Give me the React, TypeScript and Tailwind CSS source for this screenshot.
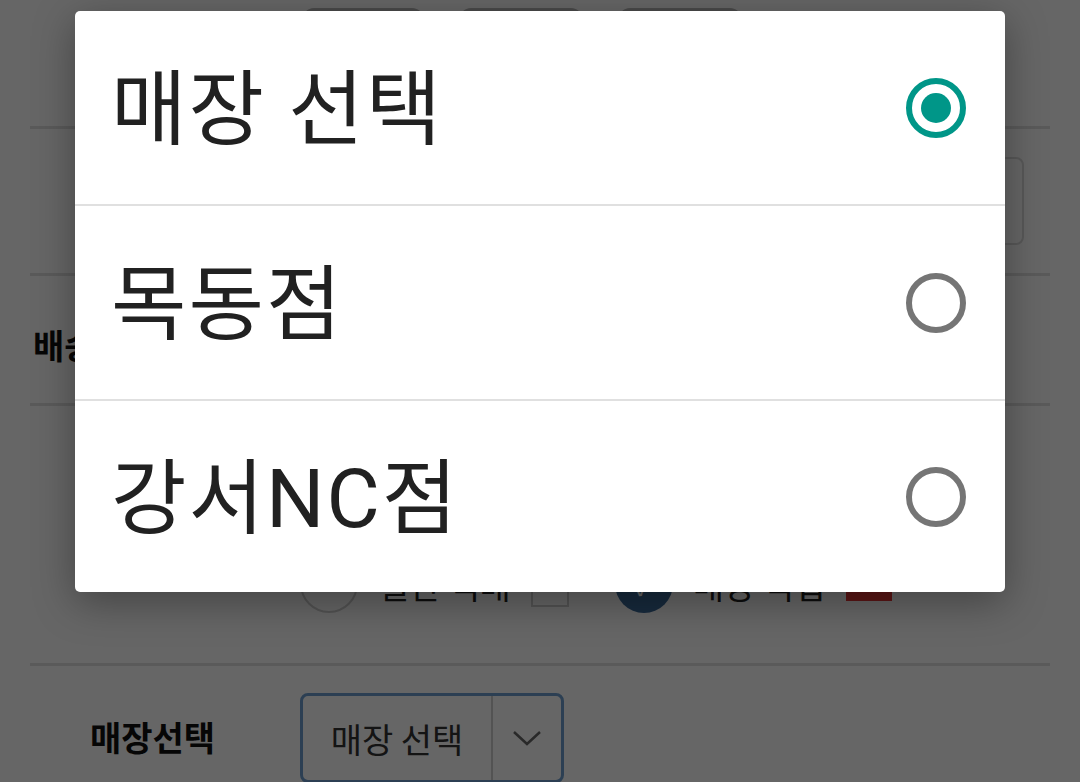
import { useState } from "react";

const stores = ["매장 선택", "목동점", "강서NC점"];

function Radio({ checked }: { checked: boolean }) {
  return (
    <div
      className={`w-[60px] h-[60px] rounded-full border-[6px] flex items-center justify-center ${
        checked ? "border-[#009688]" : "border-[#757575]"
      }`}
    >
      {checked && <div className="w-[30px] h-[30px] rounded-full bg-[#009688]" />}
    </div>
  );
}

function FormBehind() {
  return (
    <div className="min-h-[782px] bg-white px-[30px] font-['Noto_Sans_CJK_KR',sans-serif]">
      {/* tab buttons */}
      <div className="h-[126px] flex pt-[8px] pl-[272px] gap-[35px]">
        <div className="w-[122px] h-[90px] rounded-xl bg-[#b9b9b9]" />
        <div className="w-[124px] h-[90px] rounded-xl bg-[#b9b9b9]" />
        <div className="w-[124px] h-[90px] rounded-xl bg-[#b9b9b9]" />
      </div>
      <div className="h-[3px] bg-[#e0e0e0]" />
      <div className="h-[144px] flex items-center pl-[270px] pr-[26px]">
        <div className="w-full h-[88px] rounded-lg border-2 border-[#dcdcdc]" />
      </div>
      <div className="h-[3px] bg-[#e0e0e0]" />
      <div className="h-[127px] flex items-center pt-[10px]">
        <div className="pl-[3px] text-[34px] font-bold text-[#111] whitespace-nowrap">배송 방법</div>
      </div>
      <div className="h-[3px] bg-[#e0e0e0]" />
      <div className="h-[257px] flex items-end pb-[50px] pl-[270px]">
        <div className="flex items-center gap-[20px]">
          <div className="w-[58px] h-[58px] rounded-full border-2 border-[#cfcfcf]" />
          <span className="text-[34px] text-[#222]">일반 택배</span>
          <div className="w-[38px] h-[36px] border-2 border-[#cfcfcf] mt-[10px]" />
        </div>
        <div className="flex items-center gap-[20px] ml-[46px]">
          <div className="w-[58px] h-[58px] rounded-full bg-[#3b6a9a] flex items-center justify-center text-white text-[28px]">
            ✓
          </div>
          <span className="text-[34px] text-[#222]">매장 픽업</span>
          <div className="w-[46px] h-[24px] bg-[#e53935] mt-[10px]" />
        </div>
      </div>
      <div className="h-[3px] bg-[#e0e0e0]" />
      <div className="h-[120px] flex items-start pt-[27px]">
        <div className="w-[245px] text-center text-[34px] font-bold text-[#111] pt-[18px]">매장선택</div>
        <div className="ml-[25px] w-[264px] h-[90px] rounded-lg border-[3px] border-[#6f9fd0] flex">
          <div className="flex-1 flex items-center justify-center text-[34px] text-[#333] border-r-2 border-[#cfcfcf]">
            매장 선택
          </div>
          <div className="w-[68px] flex items-center justify-center">
            <svg width="30" height="18" viewBox="0 0 30 18" fill="none" stroke="#666" strokeWidth="2.5">
              <path d="M2 3 L15 15 L28 3" />
            </svg>
          </div>
        </div>
      </div>
    </div>
  );
}

export default function App() {
  const [selected, setSelected] = useState(0);

  return (
    <div className="relative w-[1080px] h-[782px] overflow-hidden">
      <FormBehind />
      <div className="absolute inset-0 bg-black/60" />
      <div className="absolute left-[75px] top-[11px] w-[930px] bg-white rounded-[5px] shadow-[0_10px_40px_rgba(0,0,0,0.35)] font-['Roboto','Noto_Sans_CJK_KR',sans-serif]">
        {stores.map((name, i) => (
          <div key={name}>
            {i > 0 && <div className="h-[2px] bg-[#e0e0e0]" />}
            <div
              onClick={() => setSelected(i)}
              className={`flex items-center justify-between pl-[36px] pr-[39px] ${
                i === 2 ? "h-[191px]" : "h-[193px]"
              }`}
            >
              <span className="text-[82px] leading-none tracking-[2px] text-[#212121] pt-[4px]">{name}</span>
              <Radio checked={selected === i} />
            </div>
          </div>
        ))}
      </div>
    </div>
  );
}
